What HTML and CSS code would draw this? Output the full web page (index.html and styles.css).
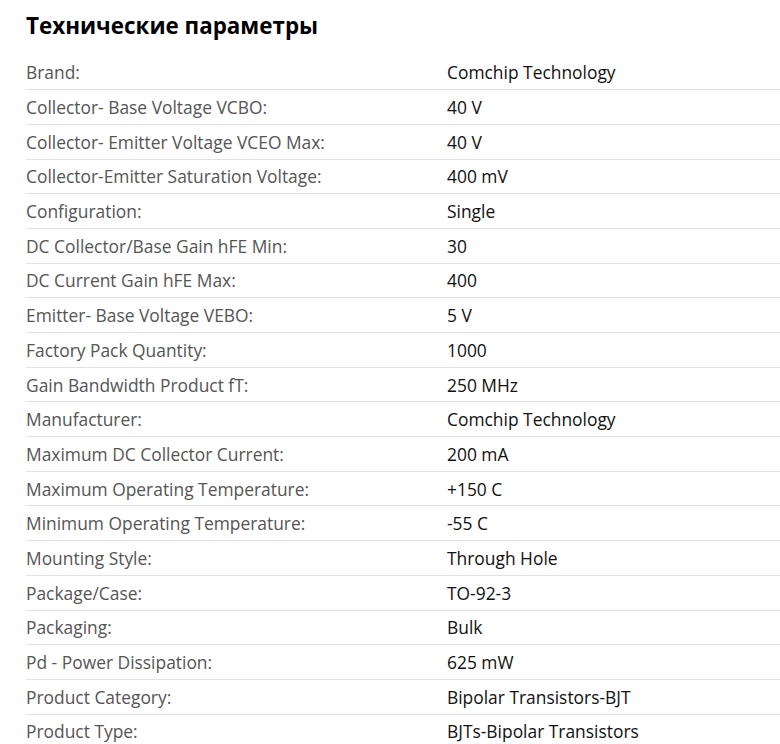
FILE: index.html
```html
<!DOCTYPE html>
<html lang="ru">
<head>
<meta charset="utf-8">
<link rel="stylesheet" href="styles.css">
</head>
<body>
<section class="specs">
  <h2 class="specs-title">Технические параметры</h2>
  <div class="specs-table">
    <div class="row"><div class="label">Brand:</div><div class="value">Comchip Technology</div></div>
    <div class="row"><div class="label">Collector- Base Voltage VCBO:</div><div class="value">40 V</div></div>
    <div class="row"><div class="label">Collector- Emitter Voltage VCEO Max:</div><div class="value">40 V</div></div>
    <div class="row"><div class="label">Collector-Emitter Saturation Voltage:</div><div class="value">400 mV</div></div>
    <div class="row"><div class="label">Configuration:</div><div class="value">Single</div></div>
    <div class="row"><div class="label">DC Collector/Base Gain hFE Min:</div><div class="value">30</div></div>
    <div class="row"><div class="label">DC Current Gain hFE Max:</div><div class="value">400</div></div>
    <div class="row"><div class="label">Emitter- Base Voltage VEBO:</div><div class="value">5 V</div></div>
    <div class="row"><div class="label">Factory Pack Quantity:</div><div class="value">1000</div></div>
    <div class="row"><div class="label">Gain Bandwidth Product fT:</div><div class="value">250 MHz</div></div>
    <div class="row"><div class="label">Manufacturer:</div><div class="value">Comchip Technology</div></div>
    <div class="row"><div class="label">Maximum DC Collector Current:</div><div class="value">200 mA</div></div>
    <div class="row"><div class="label">Maximum Operating Temperature:</div><div class="value">+150 C</div></div>
    <div class="row"><div class="label">Minimum Operating Temperature:</div><div class="value">-55 C</div></div>
    <div class="row"><div class="label">Mounting Style:</div><div class="value">Through Hole</div></div>
    <div class="row"><div class="label">Package/Case:</div><div class="value">TO-92-3</div></div>
    <div class="row"><div class="label">Packaging:</div><div class="value">Bulk</div></div>
    <div class="row"><div class="label">Pd - Power Dissipation:</div><div class="value">625 mW</div></div>
    <div class="row"><div class="label">Product Category:</div><div class="value">Bipolar Transistors-BJT</div></div>
    <div class="row"><div class="label">Product Type:</div><div class="value">BJTs-Bipolar Transistors</div></div>
  </div>
</section>
</body>
</html>
```

FILE: styles.css
```css
html, body {
  margin: 0;
  padding: 0;
  background: #ffffff;
}
body {
  font-family: "Open Sans", "Noto Sans", sans-serif;
  overflow: hidden;
}
.specs {
  padding: 10px 0 0 26px;
}
.specs-title {
  margin: 0 0 13.5px 0;
  font-size: 22.4px;
  font-weight: 700;
  line-height: 32px;
  color: #000;
}
.specs-table {
  display: flex;
  flex-direction: column;
}
.row {
  display: grid;
  grid-template-columns: 421px 1fr;
  height: 34.7px;
  box-sizing: border-box;
  align-items: center;
  border-bottom: 1px solid #e2e2e2;
  font-size: 17.4px;
}
.label {
  color: #555555;
}
.value {
  color: #111111;
}
```
